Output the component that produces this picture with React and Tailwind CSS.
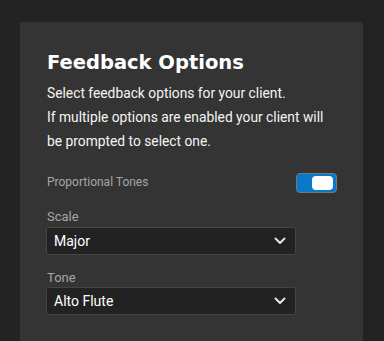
export default function App() {
  const Chevron = () => (
    <svg width="12" height="8" viewBox="0 0 12 8" fill="none" stroke="#e5e5e5" strokeWidth="2" strokeLinecap="round" strokeLinejoin="round">
      <path d="M1.5 1.5 L6 6 L10.5 1.5" />
    </svg>
  );
  return (
    <div className="w-[384px] h-[341px] bg-[#232323] overflow-hidden pt-[22px] pl-[20px]" style={{ fontFamily: "Roboto, sans-serif" }}>
      <div className="w-[343px] h-[340px] bg-[#343434] rounded-[3px] pl-[27px] pt-[27px]">
        <h1 className="text-[19.5px] leading-[28px] font-bold text-white" style={{ fontFamily: "'DejaVu Sans', sans-serif" }}>
          Feedback Options
        </h1>
        <div className="mt-[4px] text-[13.8px] leading-[24px] text-[#f5f5f5]">
          <p>Select feedback options for your client.</p>
          <p>If multiple options are enabled your client will</p>
          <p>be prompted to select one.</p>
        </div>
        <div className="mt-[21px] flex items-start w-[290px] justify-between">
          <span className="text-[12px] leading-[18px] text-[#a6a6a6] mt-[-1px]">Proportional Tones</span>
          <div className="mt-[-1px] w-[41px] h-[20px] rounded-[4px] bg-[#0a78c8] border border-[#6b7a88] flex items-center justify-end pr-[3px]">
            <div className="w-[21px] h-[14px] rounded-[4px] bg-white" />
          </div>
        </div>
        <div className="mt-[15px] text-[13px] leading-[18px] text-[#a6a6a6]">Scale</div>
        <div className="mt-[1px] ml-[-1px] w-[250px] h-[28px] bg-[#222222] border border-[#444444] rounded-[2px] flex items-center justify-between pl-[7px] pr-[9px]">
          <span className="text-[14px] text-white">Major</span>
          <Chevron />
        </div>
        <div className="mt-[14px] text-[13px] leading-[18px] text-[#a6a6a6]">Tone</div>
        <div className="mt-[0px] ml-[-1px] w-[250px] h-[28px] bg-[#222222] border border-[#444444] rounded-[2px] flex items-center justify-between pl-[7px] pr-[9px]">
          <span className="text-[14px] text-white">Alto Flute</span>
          <Chevron />
        </div>
      </div>
    </div>
  );
}
